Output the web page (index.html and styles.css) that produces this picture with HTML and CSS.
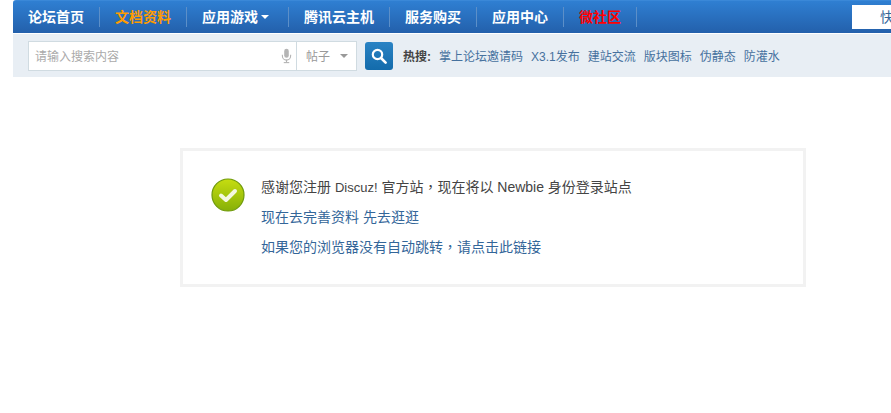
FILE: index.html
```html
<!DOCTYPE html>
<html lang="zh-CN">
<head>
<meta charset="utf-8">
<title>感谢您注册</title>
<link rel="stylesheet" href="styles.css">
</head>
<body>
<div class="page">
  <nav class="nav">
    <ul class="nav-list">
      <li class="nav-item"><a href="#">论坛首页</a></li>
      <li class="nav-item"><a href="#" class="orange">文档资料</a></li>
      <li class="nav-item"><a href="#">应用游戏<span class="caret"></span></a></li>
      <li class="nav-item"><a href="#">腾讯云主机</a></li>
      <li class="nav-item"><a href="#">服务购买</a></li>
      <li class="nav-item"><a href="#">应用中心</a></li>
      <li class="nav-item"><a href="#" class="red">微社区</a></li>
    </ul>
    <a href="#" class="quick">快捷导航</a>
  </nav>
  <div class="subnav">
    <div class="search">
      <span class="placeholder">请输入搜索内容</span>
      <svg class="mic" width="11" height="16" viewBox="0 0 12 16"><rect x="3.5" y="0" width="5" height="10" rx="2.5" fill="#b4b4b4"/><path d="M1.5 6.5v1.5a4.5 4.5 0 0 0 9 0V6.5" fill="none" stroke="#b4b4b4" stroke-width="1.2"/><rect x="5.4" y="12" width="1.2" height="3" fill="#b4b4b4"/><rect x="3" y="14.6" width="6" height="1.2" fill="#b4b4b4"/></svg>
      <span class="type">帖子<span class="type-caret"></span></span>
    </div>
    <button class="search-btn" type="button" aria-label="搜索">
      <svg width="16" height="16" viewBox="0 0 16 16"><circle cx="6.5" cy="6.5" r="4.7" fill="none" stroke="#fff" stroke-width="2.2"/><path d="M10 10l4.6 4.6" stroke="#fff" stroke-width="2.6" stroke-linecap="round"/></svg>
    </button>
    <div class="hot">
      <strong>热搜:</strong>
      <a href="#">掌上论坛邀请码</a>
      <a href="#">X3.1发布</a>
      <a href="#">建站交流</a>
      <a href="#">版块图标</a>
      <a href="#">伪静态</a>
      <a href="#">防灌水</a>
    </div>
  </div>
  <section class="message">
    <svg class="ok" width="34" height="34" viewBox="0 0 34 34">
      <defs><linearGradient id="g" x1="0" y1="0" x2="0" y2="1"><stop offset="0" stop-color="#c6dd10"/><stop offset="1" stop-color="#86b008"/></linearGradient></defs>
      <circle cx="17" cy="17" r="16" fill="url(#g)" stroke="#6f9a0a" stroke-width="1.2"/>
      <path d="M10 17.5l5 4.5 9-9" fill="none" stroke="#f4f8e0" stroke-width="4" stroke-linecap="round" stroke-linejoin="round"/>
    </svg>
    <div class="message-text">
      <p>感谢您注册 <span class="latin">Discuz!</span> 官方站<span class="comma" lang="zh-TW">，</span>现在将以 Newbie 身份登录站点</p>
      <p><a href="#">现在去完善资料</a> <a href="#">先去逛逛</a></p>
      <p><a href="#">如果您的浏览器没有自动跳转<span class="comma" lang="zh-TW">，</span>请点击此链接</a></p>
    </div>
  </section>
</div>
</body>
</html>
```
FILE: styles.css
```css
* { box-sizing: border-box; }
html, body { margin: 0; padding: 0; }
body {
  background: #fff;
  color: #444;
  font-family: "Liberation Sans", "Noto Sans CJK SC", sans-serif;
  overflow: hidden;
}
a { text-decoration: none; color: #369; }
.page { padding-left: 13px; height: 413px; overflow: hidden; }

.nav {
  display: flex;
  align-items: center;
  height: 33px;
  background: linear-gradient(#2f7fd2, #2360ab);
  border-top: 1px solid #3a88d8;
  border-radius: 3px 0 0 0;
  overflow: hidden;
}
.nav-list { display: flex; list-style: none; margin: 0; padding: 0; }
.nav-item {
  height: 20px;
  border-right: 1px solid #5c8fc8;
  padding: 0 15px;
  line-height: 20px;
}
.nav-item:nth-child(3) { padding-right: 19px; }
.nav-item a { color: #fff; font-weight: bold; font-size: 14px; white-space: nowrap; }
.nav-item a.orange { color: #ff9c00; }
.nav-item a.red { color: #f00; }
.caret {
  display: inline-block;
  margin-left: 3px;
  vertical-align: 3px;
  border: 4px solid transparent;
  border-bottom: 0;
  border-top-color: #fff;
}
.quick {
  margin-left: auto;
  width: 39px;
  height: 24px;
  flex: none;
  background: #fff;
  color: #369;
  font-size: 14px;
  line-height: 24px;
  padding-left: 28px;
  white-space: nowrap;
  overflow: hidden;
}

.subnav {
  display: flex;
  align-items: center;
  height: 44px;
  margin-top: 0;
  border-top: 1px solid #fff;
  background: #e8eef4;
  padding-left: 15px;
}
.search {
  display: flex;
  align-items: center;
  width: 329px;
  height: 30px;
  background: #fff;
  border: 1px solid #d0dbe1;
  padding-left: 6px;
}
.placeholder { flex: 1; font-size: 12px; color: #aaa; }
.mic { margin-right: 4px; }
.type {
  display: flex;
  align-items: center;
  width: 60px;
  height: 100%;
  border-left: 1px solid #d0dbe1;
  padding-left: 9px;
  font-size: 12px;
  color: #999;
}
.type-caret {
  margin-left: 10px;
  border: 4px solid transparent;
  border-bottom: 0;
  border-top: 4px solid #999;
}
.search-btn {
  display: flex;
  align-items: center;
  justify-content: center;
  width: 28px;
  height: 28px;
  margin-left: 8px;
  padding: 0;
  border: 0;
  border-radius: 3px;
  background: linear-gradient(#2a83c4, #136bab);
}
.hot {
  display: flex;
  align-items: center;
  gap: 8px;
  margin-left: 10px;
  font-size: 12px;
  white-space: nowrap;
}
.hot strong { color: #444; margin-right: 0; }
.hot a { color: #46719e; }

.message {
  display: flex;
  width: 626px;
  height: 139px;
  margin: 71px 0 0 167px;
  border: 3px solid #f2f2f2;
  padding: 21px 0 0 28px;
}
.ok { flex: none; margin-top: 6px; }
.message-text { margin-left: 16px; font-size: 14px; }
.message-text p { margin: 0; height: 30px; line-height: 30px; white-space: nowrap; }
.message-text a { color: #369; }
.latin { font-size: 13px; }
.comma { font-family: "Noto Sans CJK TC", sans-serif; line-height: 0; }
```
